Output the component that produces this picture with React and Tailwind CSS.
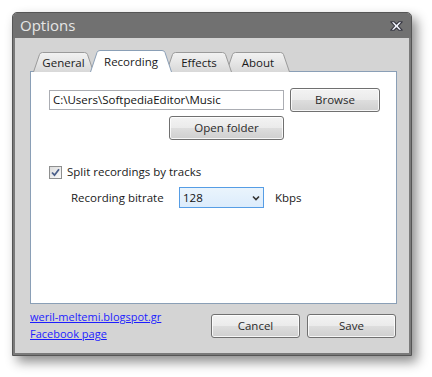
import React from "react";

const font = { fontFamily: '"Segoe UI", "Open Sans", "Noto Sans", sans-serif' };

function Tab({ label, selected, w, ml, z }) {
  return (
    <div
      className={`relative flex items-end justify-center ${selected ? "h-[22px]" : "h-[20px]"} ${ml} ${z}`}
      style={{ width: w }}
    >
      <svg className="absolute inset-0" width={w} height={selected ? 22 : 20} viewBox={`0 0 ${w} ${selected ? 22 : 20}`}>
        <defs>
          <linearGradient id="tg" x1="0" y1="0" x2="0" y2="1">
            <stop offset="0" stopColor="#f2f2f2" />
            <stop offset="0.5" stopColor="#e6e6e6" />
            <stop offset="1" stopColor="#d8d8d8" />
          </linearGradient>
        </defs>
        {selected ? (
          <path
            d={`M0.5 22 L7 2.5 Q7.7 0.5 10 0.5 L${w - 10} 0.5 Q${w - 7.7} 0.5 ${w - 7} 2.5 L${w - 0.5} 22`}
            fill="#ffffff"
            stroke="#8a9fb6"
          />
        ) : (
          <path
            d={`M0.5 20 L6.5 2.5 Q7.2 0.5 9.5 0.5 L${w - 9.5} 0.5 Q${w - 7.2} 0.5 ${w - 6.5} 2.5 L${w - 0.5} 20`}
            fill="url(#tg)"
            stroke="#9a9a9a"
          />
        )}
      </svg>
      <span className={`relative text-[11.5px] text-[#1a1a1a] ${selected ? "pb-[2px]" : "pb-[1px]"}`}>{label}</span>
    </div>
  );
}

function Btn({ children, w, h = 24 }) {
  return (
    <button
      className="flex items-center justify-center rounded-[3px] border border-[#707070] text-[11.5px] text-[#2a2a2a] bg-[linear-gradient(#f3f3f3_0%,#ebebeb_48%,#dddddd_52%,#cfcfcf_100%)] shadow-[inset_0_0_0_1px_rgba(255,255,255,0.8)]"
      style={{ width: w, height: h }}
    >
      {children}
    </button>
  );
}

export default function App() {
  return (
    <div className="w-[432px] h-[377px] bg-white pl-[12px] pt-[12px]" style={font}>
      <div className="w-[400px] h-[344px] flex flex-col rounded-t-[5px] border border-[#555] bg-[#d4d4d4] shadow-[5px_6px_12px_rgba(0,0,0,0.45)] overflow-hidden">
        {/* title bar */}
        <div className="h-[25px] shrink-0 bg-[#717171] flex items-center justify-between pl-[7px] pr-[8px]">
          <span className="text-[15px] text-[#e6e6e6] leading-none pb-[1px]">Options</span>
          <svg width="13" height="10" viewBox="0 0 13 10">
            <path
              d="M0.8 0.8 L4.3 0.8 L6.5 3.2 L8.7 0.8 L12.2 0.8 L8.4 5 L12.2 9.2 L8.7 9.2 L6.5 6.8 L4.3 9.2 L0.8 9.2 L4.6 5 Z"
              fill="#eceef8"
              stroke="#34343f"
              strokeWidth="1.1"
              strokeLinejoin="round"
            />
          </svg>
        </div>
        {/* body */}
        <div className="flex-1 border-l-[2px] border-r-[2px] border-b-[2px] border-[#7a7a7a] pl-[15px] pt-[12px]">
          {/* tabs */}
          <div className="flex items-end pl-[3px] h-[22px]">
            <Tab label="General" w={61} ml="" z="z-[1]" />
            <Tab label="Recording" selected w={82} ml="-ml-[4px]" z="z-[5]" />
            <Tab label="Effects" w={66} ml="-ml-[6px]" z="z-[2]" />
            <Tab label="About" w={64} ml="-ml-[6px]" z="z-[1]" />
          </div>
          {/* panel */}
          <div className="relative -mt-[1px] w-[367px] h-[233px] bg-white border border-[#8a9fb6] pl-[18px] pt-[16px]">
            <div className="flex items-center gap-[6px]">
              <div className="w-[235px] h-[20px] border border-[#abadb3] flex items-center pl-[3px] text-[11.5px] text-[#111]">
                C:\Users\SoftpediaEditor\Music
              </div>
              <Btn w={90}>Browse</Btn>
            </div>
            <div className="w-[235px] flex justify-end mt-[4px]">
              <Btn w={115}>Open folder</Btn>
            </div>
            <div className="flex items-center mt-[25px] h-[14px]">
              <div className="w-[13px] h-[13px] border border-[#8e8f8f] bg-[linear-gradient(135deg,#dcdcdc,#fbfbfb)] flex items-center justify-center">
                <svg width="9" height="9" viewBox="0 0 9 9">
                  <path d="M1 4.5 L3.5 7.2 L8 1.2" fill="none" stroke="#4b5f8a" strokeWidth="1.8" />
                </svg>
              </div>
              <span className="ml-[5px] text-[11.5px] text-[#1a1a1a]">Split recordings by tracks</span>
            </div>
            <div className="flex items-center mt-[8px] h-[21px]">
              <span className="ml-[22px] w-[108px] text-[11.5px] text-[#1a1a1a]">Recording bitrate</span>
              <div className="w-[85px] h-[21px] border border-[#569de5] bg-[linear-gradient(#eaf4fc,#dcecfc)] flex items-center justify-between pl-[3px] pr-[3px] text-[11.5px] text-[#111]">
                <span>128</span>
                <svg width="8" height="6" viewBox="0 0 8 6">
                  <path d="M1 1.5 L4 4.5 L7 1.5" fill="none" stroke="#333" strokeWidth="1.6" />
                </svg>
              </div>
              <span className="ml-[11px] text-[11.5px] text-[#1a1a1a]">Kbps</span>
            </div>
          </div>
          {/* footer */}
          <div className="w-[367px] flex justify-between mt-[4px]">
            <div className="flex flex-col text-[11px] leading-[17px] text-[#1d1dff] underline">
              <span>weril-meltemi.blogspot.gr</span>
              <span>Facebook page</span>
            </div>
            <div className="flex gap-[7px] mt-[6px] mr-[1px]">
              <Btn w={89}>Cancel</Btn>
              <Btn w={89}>Save</Btn>
            </div>
          </div>
        </div>
      </div>
    </div>
  );
}
